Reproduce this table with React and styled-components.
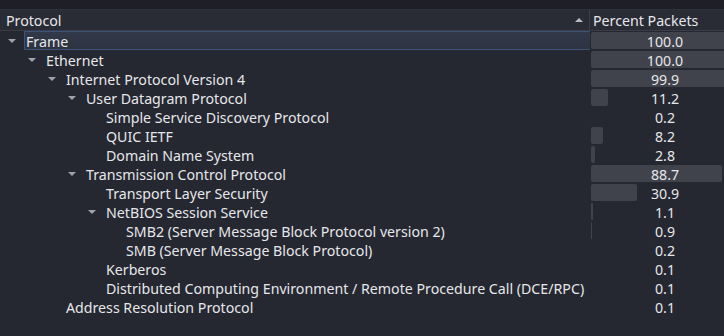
import React from "react"
import styled, { createGlobalStyle } from "styled-components"

const GlobalStyle = createGlobalStyle`
  html, body {
    margin: 0;
    padding: 0;
    background: #252731;
    overflow: hidden;
  }
  body {
    font-family: "Noto Sans", "Open Sans", sans-serif;
    font-size: 14.2px;
    color: #e6e7ea;
  }
`

const rows = [
  { name: "Frame", level: 0, open: true, pct: 100.0, selected: true },
  { name: "Ethernet", level: 1, open: true, pct: 100.0 },
  { name: "Internet Protocol Version 4", level: 2, open: true, pct: 99.9 },
  { name: "User Datagram Protocol", level: 3, open: true, pct: 11.2 },
  { name: "Simple Service Discovery Protocol", level: 4, pct: 0.2 },
  { name: "QUIC IETF", level: 4, pct: 8.2 },
  { name: "Domain Name System", level: 4, pct: 2.8 },
  { name: "Transmission Control Protocol", level: 3, open: true, pct: 88.7 },
  { name: "Transport Layer Security", level: 4, pct: 30.9 },
  { name: "NetBIOS Session Service", level: 4, open: true, pct: 1.1 },
  { name: "SMB2 (Server Message Block Protocol version 2)", level: 5, pct: 0.9 },
  { name: "SMB (Server Message Block Protocol)", level: 5, pct: 0.2 },
  { name: "Kerberos", level: 4, pct: 0.1 },
  { name: "Distributed Computing Environment / Remote Procedure Call (DCE/RPC)", level: 4, pct: 0.1 },
  { name: "Address Resolution Protocol", level: 2, pct: 0.1 },
]

const Window = styled.div`
  width: 724px;
  height: 336px;
  overflow: hidden;
  display: flex;
  flex-direction: column;
`

const TopBand = styled.div`
  height: 9px;
  background: #1e1f27;
  border-bottom: 1px solid #2e313b;
`

const Table = styled.div`
  width: 740px;
  display: grid;
  grid-template-columns: 590px 150px;
`

const HeadCell = styled.div`
  height: 19px;
  line-height: 19px;
  padding-top: 1px;
  padding-left: ${(p) => p.$pad}px;
  background: #292b35;
  border-bottom: 1px solid #3a3d48;
  border-right: ${(p) => (p.$divider ? "1px solid #3a3d48" : "none")};
  color: #e6e7ea;
  display: flex;
  align-items: center;
  justify-content: space-between;
  padding-right: 6px;
`

const SortUp = styled.span`
  width: 0;
  height: 0;
  border-left: 4px solid transparent;
  border-right: 4px solid transparent;
  border-bottom: 4px solid #b9bbc2;
  margin-top: -2px;
`

const NameCell = styled.div`
  height: 19px;
  display: flex;
  align-items: center;
  padding-left: ${(p) => 6 + p.$level * 20}px;
  white-space: nowrap;
`

const Arrow = styled.span`
  width: 20px;
  flex: none;
  display: flex;
  justify-content: flex-start;
  padding-left: 2px;
  box-sizing: border-box;

  &::before {
    content: "";
    display: ${(p) => (p.$open ? "block" : "none")};
    border-left: 4px solid transparent;
    border-right: 4px solid transparent;
    border-top: 4px solid #9fa2ab;
  }
`

const Label = styled.span`
  height: 19px;
  flex: 1;
  box-sizing: border-box;
  border: 1px solid ${(p) => (p.$selected ? "#3a5378" : "transparent")};
  border-right: none;
  background: ${(p) => (p.$selected ? "linear-gradient(#323949, #2d3341)" : "transparent")};
  margin-left: -2px;
  padding-left: 1px;
  padding-top: 1px;
  border-radius: 1px;
  display: flex;
  align-items: center;
`

const PctCell = styled.div`
  height: 19px;
  position: relative;
  display: flex;
  align-items: center;
`

const Bar = styled.div`
  position: absolute;
  left: 1px;
  top: 1px;
  bottom: 1px;
  background: #41434c;
  border-radius: 2px;
`

const Value = styled.span`
  position: relative;
  width: 100%;
  text-align: center;
  line-height: 19px;
  padding-top: 1px;
`

export default function App() {
  return (
    <Window>
      <GlobalStyle />
      <TopBand />
      <Table>
        <HeadCell $pad={6} $divider>
          <span>Protocol</span>
          <SortUp />
        </HeadCell>
        <HeadCell $pad={3}>
          <span>Percent Packets</span>
        </HeadCell>
        {rows.map((r) => (
          <React.Fragment key={r.name}>
            <NameCell $level={r.level}>
              <Arrow $open={r.open} />
              <Label $selected={r.selected}>{r.name}</Label>
            </NameCell>
            <PctCell>
              <Bar style={{ width: `${Math.round(r.pct * 1.48)}px` }} />
              <Value>{r.pct.toFixed(1)}</Value>
            </PctCell>
          </React.Fragment>
        ))}
      </Table>
    </Window>
  )
}
